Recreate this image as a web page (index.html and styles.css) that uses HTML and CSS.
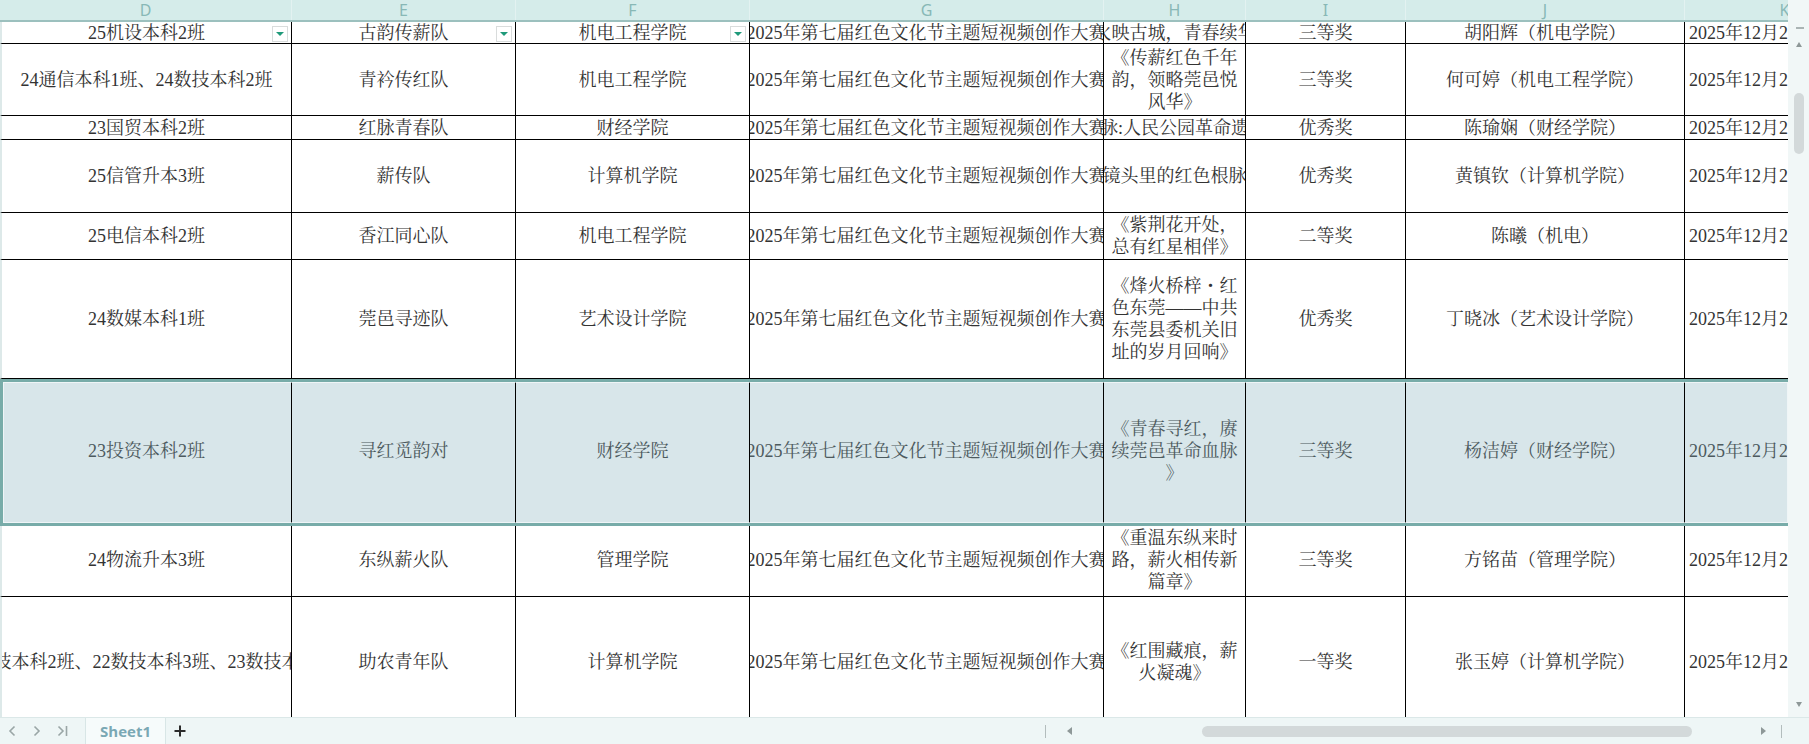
FILE: index.html
```html
<!DOCTYPE html>
<html lang="zh-CN">
<head>
<meta charset="utf-8">
<title>Sheet1</title>
<link rel="stylesheet" href="styles.css">
</head>
<body>
<div class="app">
  <div class="main">
    <div class="sheet">
      <div class="colhdr">
        <div class="ch d">D</div><div class="ch e">E</div><div class="ch f">F</div><div class="ch g">G</div><div class="ch h">H</div><div class="ch i">I</div><div class="ch j">J</div><div class="ch k">K</div>
      </div>

      <div class="row r1">
        <div class="c d flt-cell"><span>25机设本科2班</span><i class="flt"></i></div>
        <div class="c e flt-cell"><span>古韵传薪队</span><i class="flt"></i></div>
        <div class="c f flt-cell"><span>机电工程学院</span><i class="flt"></i></div>
        <div class="c g"><span>2025年第七届红色文化节主题短视频创作大赛</span></div>
        <div class="c h"><span>《火映古城，青春续华》</span></div>
        <div class="c i"><span>三等奖</span></div>
        <div class="c j"><span>胡阳辉（机电学院）</span></div>
        <div class="c k"><span>2025年12月25日</span></div>
      </div>

      <div class="row r2">
        <div class="c d"><span>24通信本科1班、24数技本科2班</span></div>
        <div class="c e"><span>青衿传红队</span></div>
        <div class="c f"><span>机电工程学院</span></div>
        <div class="c g"><span>2025年第七届红色文化节主题短视频创作大赛</span></div>
        <div class="c h"><span>《传薪红色千年<br>韵，领略莞邑悦<br>风华》</span></div>
        <div class="c i"><span>三等奖</span></div>
        <div class="c j"><span>何可婷（机电工程学院）</span></div>
        <div class="c k"><span>2025年12月25日</span></div>
      </div>

      <div class="row r3">
        <div class="c d"><span>23国贸本科2班</span></div>
        <div class="c e"><span>红脉青春队</span></div>
        <div class="c f"><span>财经学院</span></div>
        <div class="c g"><span>2025年第七届红色文化节主题短视频创作大赛</span></div>
        <div class="c h"><span>《赓续红脉:人民公园革命遗址探访》</span></div>
        <div class="c i"><span>优秀奖</span></div>
        <div class="c j"><span>陈瑜娴（财经学院）</span></div>
        <div class="c k"><span>2025年12月25日</span></div>
      </div>

      <div class="row r4">
        <div class="c d"><span>25信管升本3班</span></div>
        <div class="c e"><span>薪传队</span></div>
        <div class="c f"><span>计算机学院</span></div>
        <div class="c g"><span>2025年第七届红色文化节主题短视频创作大赛</span></div>
        <div class="c h"><span>《镜头里的红色根脉》</span></div>
        <div class="c i"><span>优秀奖</span></div>
        <div class="c j"><span>黄镇钦（计算机学院）</span></div>
        <div class="c k"><span>2025年12月25日</span></div>
      </div>

      <div class="row r5">
        <div class="c d"><span>25电信本科2班</span></div>
        <div class="c e"><span>香江同心队</span></div>
        <div class="c f"><span>机电工程学院</span></div>
        <div class="c g"><span>2025年第七届红色文化节主题短视频创作大赛</span></div>
        <div class="c h"><span>《紫荆花开处，<br>总有红星相伴》</span></div>
        <div class="c i"><span>二等奖</span></div>
        <div class="c j"><span>陈曦（机电）</span></div>
        <div class="c k"><span>2025年12月25日</span></div>
      </div>

      <div class="row r6">
        <div class="c d"><span>24数媒本科1班</span></div>
        <div class="c e"><span>莞邑寻迹队</span></div>
        <div class="c f"><span>艺术设计学院</span></div>
        <div class="c g"><span>2025年第七届红色文化节主题短视频创作大赛</span></div>
        <div class="c h"><span>《烽火桥梓・红<br>色东莞——中共<br>东莞县委机关旧<br>址的岁月回响》</span></div>
        <div class="c i"><span>优秀奖</span></div>
        <div class="c j"><span>丁晓冰（艺术设计学院）</span></div>
        <div class="c k"><span>2025年12月25日</span></div>
      </div>

      <div class="row r7 sel">
        <div class="c d"><span>23投资本科2班</span></div>
        <div class="c e"><span>寻红觅韵对</span></div>
        <div class="c f"><span>财经学院</span></div>
        <div class="c g"><span>2025年第七届红色文化节主题短视频创作大赛</span></div>
        <div class="c h"><span>《青春寻红，赓<br>续莞邑革命血脉<br>》</span></div>
        <div class="c i"><span>三等奖</span></div>
        <div class="c j"><span>杨洁婷（财经学院）</span></div>
        <div class="c k"><span>2025年12月25日</span></div>
      </div>

      <div class="row r8">
        <div class="c d"><span>24物流升本3班</span></div>
        <div class="c e"><span>东纵薪火队</span></div>
        <div class="c f"><span>管理学院</span></div>
        <div class="c g"><span>2025年第七届红色文化节主题短视频创作大赛</span></div>
        <div class="c h"><span>《重温东纵来时<br>路，薪火相传新<br>篇章》</span></div>
        <div class="c i"><span>三等奖</span></div>
        <div class="c j"><span>方铭苗（管理学院）</span></div>
        <div class="c k"><span>2025年12月25日</span></div>
      </div>

      <div class="row r9">
        <div class="c d"><span>22数技本科2班、22数技本科3班、23数技本科班</span></div>
        <div class="c e"><span>助农青年队</span></div>
        <div class="c f"><span>计算机学院</span></div>
        <div class="c g"><span>2025年第七届红色文化节主题短视频创作大赛</span></div>
        <div class="c h"><span>《红围藏痕，薪<br>火凝魂》</span></div>
        <div class="c i"><span>一等奖</span></div>
        <div class="c j"><span>张玉婷（计算机学院）</span></div>
        <div class="c k"><span>2025年12月25日</span></div>
      </div>
    </div>

    <div class="vscroll">
      <i class="vs-min"></i>
      <i class="vs-up"></i>
      <i class="vs-thumb"></i>
      <i class="vs-down"></i>
    </div>
  </div>

  <div class="tabbar">
    <div class="nav">
      <span class="nav-btn"><svg width="8" height="12" viewBox="0 0 8 12"><path d="M6.5 1.5 L2 6 L6.5 10.5" fill="none" stroke="#9aa6a6" stroke-width="1.6"/></svg></span>
      <span class="nav-btn"><svg width="8" height="12" viewBox="0 0 8 12"><path d="M1.5 1.5 L6 6 L1.5 10.5" fill="none" stroke="#9aa6a6" stroke-width="1.6"/></svg></span>
      <span class="nav-btn"><svg width="12" height="12" viewBox="0 0 12 12"><path d="M1.5 1.5 L6 6 L1.5 10.5" fill="none" stroke="#9aa6a6" stroke-width="1.6"/><path d="M9.5 1 V11" stroke="#9aa6a6" stroke-width="1.6"/></svg></span>
    </div>
    <div class="tab">Sheet1</div>
    <div class="add"><svg width="12" height="12" viewBox="0 0 12 12"><path d="M6 0.5 V11.5 M0.5 6 H11.5" stroke="#2b2b2b" stroke-width="2"/></svg></div>
    <div class="spacer"></div>
    <div class="hs">
      <i class="hsep"></i>
      <i class="harr-l"></i>
      <i class="hthumb"></i>
      <i class="harr-r"></i>
      <i class="hsep hsep2"></i>
    </div>
  </div>
</div>
</body>
</html>
```
FILE: styles.css
```css
* { box-sizing: border-box; margin: 0; padding: 0; }
html, body { width: 1809px; height: 744px; overflow: hidden; background: #fff; }
body { font-family: "Liberation Serif", "Noto Serif CJK SC", "Noto Sans CJK SC", serif; }

.app { display: flex; flex-direction: column; height: 744px; }
.main { display: flex; height: 717px; flex-shrink: 0; }
.sheet { width: 1788px; overflow: hidden; display: flex; flex-direction: column; flex-shrink: 0; }

.colhdr { display: flex; height: 22px; flex-shrink: 0; background: #d5ecea; border-bottom: 2px solid #9cc0be; }
.ch { flex-shrink: 0; display: flex; align-items: center; justify-content: center; font-family: "Noto Sans", "Open Sans", sans-serif; font-size: 16px; line-height: 20px; color: #88b8b6; border-right: 1px solid #e3f2f1; }

.row { display: flex; flex-shrink: 0; }
.c { flex-shrink: 0; display: flex; align-items: center; justify-content: center; overflow: hidden; border-right: 1px solid #000; border-bottom: 1px solid #000; font-size: 18px; line-height: 22px; color: #333; text-align: center; white-space: nowrap; }
.c > span { flex-shrink: 0; }

.d { width: 292px; }
.c.d { border-left: 2px solid #dde9e9; }
.e { width: 224px; }
.f { width: 234px; }
.g { width: 354px; }
.h { width: 142px; }
.i { width: 160px; }
.j { width: 279px; }
.k { width: 200px; }
.c.k { justify-content: flex-start; padding-left: 4px; border-right: 0; }

.r1 { height: 22px; }
.r2 { height: 72px; }
.r3 { height: 24px; }
.r4 { height: 73px; }
.r5 { height: 47px; }
.r6 { height: 119px; }
.r7 { height: 145px; }
.r8 { height: 73px; }
.r9 { height: 130px; }

.flt-cell { position: relative; }
.flt { position: absolute; right: 3px; top: 4px; width: 16px; height: 16px; background: #fff; border: 1px solid #d9dcdc; }
.flt::after { content: ""; position: absolute; left: 3px; top: 5px; border-left: 4px solid transparent; border-right: 4px solid transparent; border-top: 4px solid #1f9a7a; }

.sel { position: relative; }
.sel .c { background: #d8e6ea; color: #4d5a5e; }
.sel::after { content: ""; position: absolute; left: 0; right: 0; top: 0; bottom: -2px; z-index: 2; border: 3px solid #78aca9; border-right: 0; box-shadow: inset 0 0 0 1px rgba(255,255,255,0.6); pointer-events: none; }

.vscroll { width: 21px; flex-shrink: 0; background: #f1f7f7; display: flex; flex-direction: column; align-items: center; padding-top: 27px; padding-bottom: 10px; }
.vs-min { display: block; width: 8px; height: 2px; background: #aab4b4; margin-left: 2px; }
.vs-up { display: block; margin-top: 13px; width: 0; height: 0; border-left: 3.5px solid transparent; border-right: 3.5px solid transparent; border-bottom: 5px solid #8e9898; margin-left: 1px; }
.vs-thumb { display: block; margin-top: 46px; width: 10px; height: 61px; background: #d3d9da; border-radius: 5px; margin-left: 1px; }
.vs-down { display: block; margin-top: auto; width: 0; height: 0; border-left: 3.5px solid transparent; border-right: 3.5px solid transparent; border-top: 5px solid #8e9898; margin-left: 1px; }

.tabbar { height: 27px; flex-shrink: 0; display: flex; align-items: stretch; background: #eef6f6; border-top: 1px solid #dbe8e8; }
.nav { width: 85px; display: flex; align-items: center; }
.nav-btn { display: flex; align-items: center; justify-content: center; width: 26px; }
.nav-btn:first-child { width: 24px; }
.tab { width: 81px; display: flex; align-items: center; justify-content: center; font-family: "Open Sans", "Noto Sans", sans-serif; font-weight: 700; font-size: 15px; color: #7aa8b4; background: #f6fbfb; border-left: 1px solid #d8e6e6; border-right: 1px solid #d8e6e6; }
.add { width: 28px; display: flex; align-items: center; justify-content: center; }
.spacer { flex: 1; }
.hs { width: 764px; display: flex; align-items: center; }
.hsep { display: block; width: 1px; height: 13px; background: #b3bdbd; }
.harr-l { display: block; margin-left: 21px; width: 0; height: 0; border-top: 4px solid transparent; border-bottom: 4px solid transparent; border-right: 5px solid #8e9898; }
.hthumb { display: block; margin-left: 130px; width: 490px; height: 11px; border-radius: 6px; background: #d3d9da; }
.harr-r { display: block; margin-left: 69px; width: 0; height: 0; border-top: 4px solid transparent; border-bottom: 4px solid transparent; border-left: 5px solid #8e9898; }
.hsep2 { margin-left: 15px; }
```
